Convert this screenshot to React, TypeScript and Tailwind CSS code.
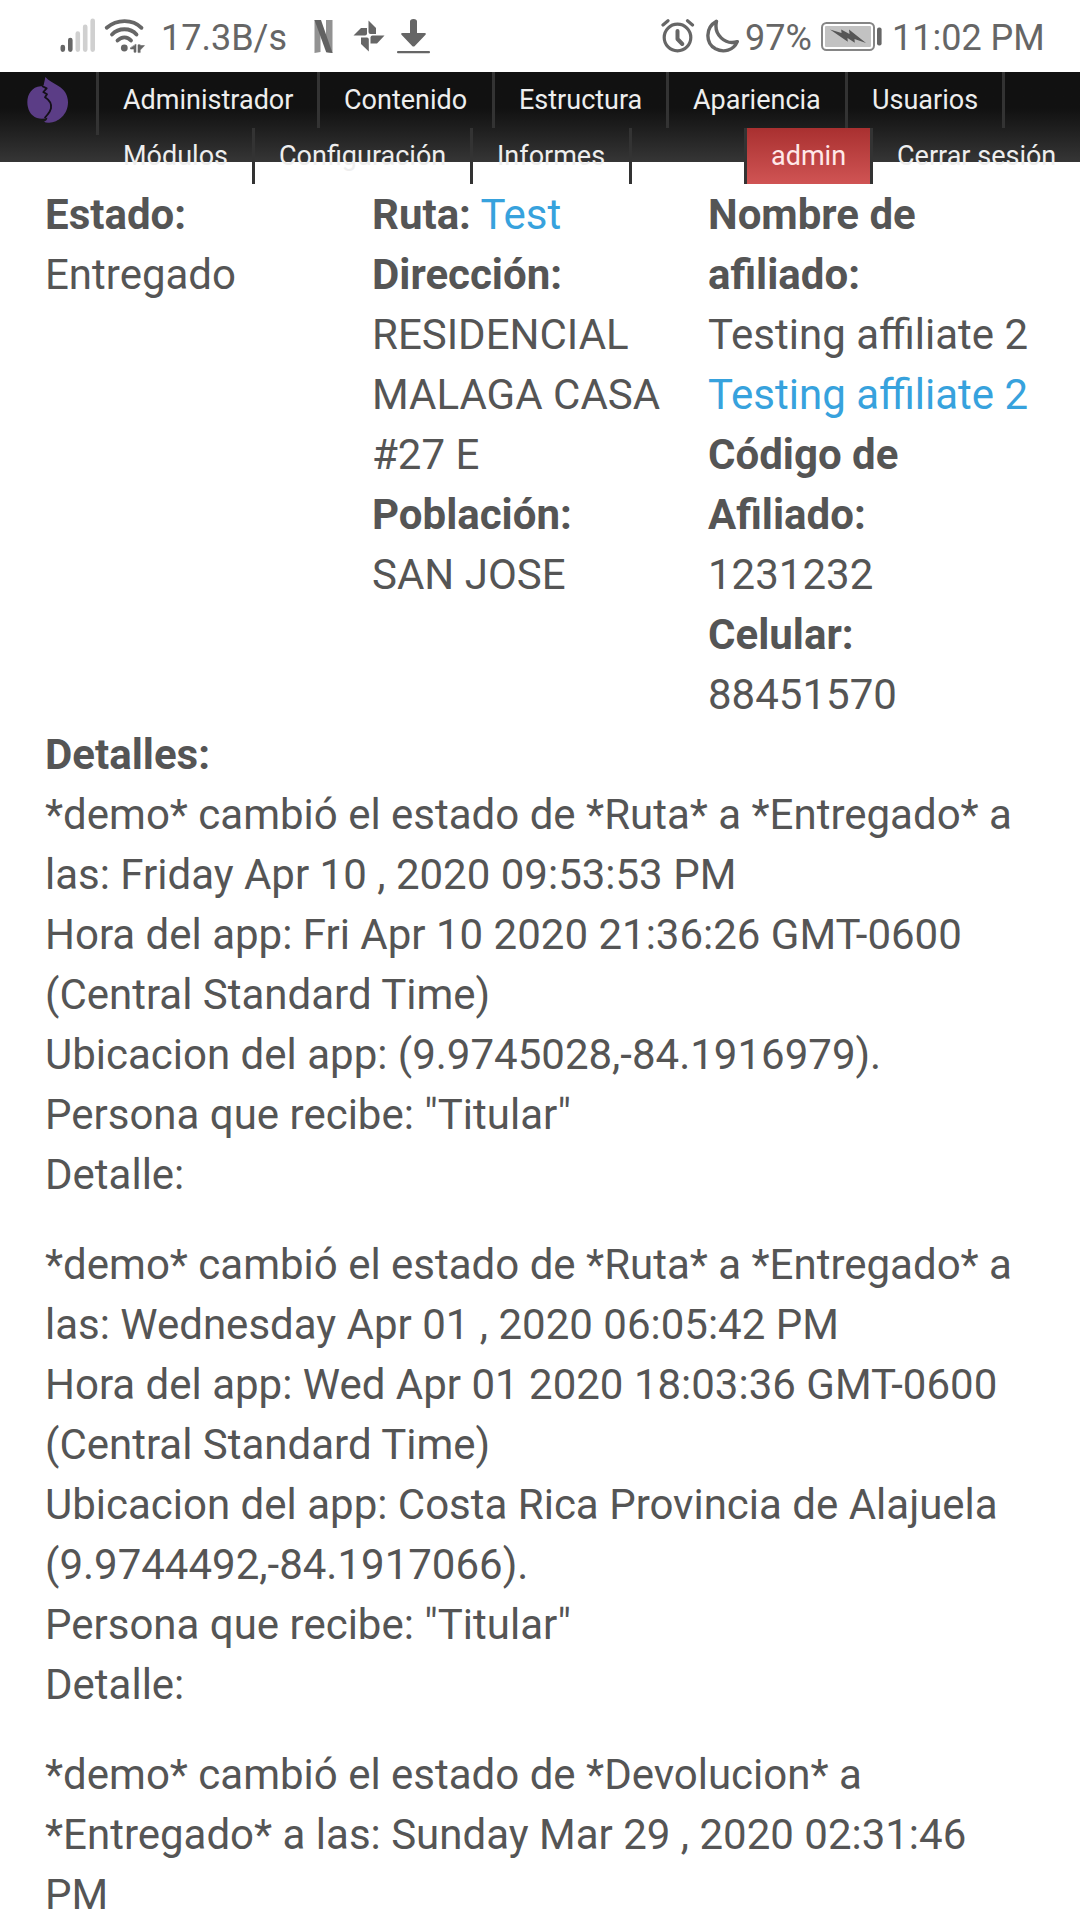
import React from "react";

const SignalIcon = () => (
  <svg className="h-[36px] w-[37px]" viewBox="0 0 37 36" strokeWidth="4.6" strokeLinecap="round">
    <path d="M2.8 29v2.6M10.3 22v9.6" stroke="#666" />
    <path d="M17.8 15.5v16.1M25.2 8.800v22.800M32.700 2.800v28.800" stroke="#d0d0d0" />
  </svg>
);

const WifiIcon = () => (
  <svg className="h-[36px] w-[42px]" viewBox="0 0 42 36" fill="none" stroke="#666" strokeWidth="3.800" strokeLinecap="round">
    <path d="M2.700 9.800C13 .9 28.500 .9 37.500 9.800M8 16.500C14.500 9.500 26.500 9.500 32.500 16.500M13.500 22.500C17.500 18.200 23.500 18.200 27 22.500" />
    <circle cx="20.300" cy="30" r="3.400" fill="#666" stroke="none" />
    <path d="M32 26.500v7.700h-2v-3.200h-3.500v-1zM34 34.200V26.800h2.200v.8h4.300l-4.300 4.500v2.100z" fill="#666" stroke="#666" strokeWidth=".6" />
  </svg>
);

const NIcon = () => (
  <svg className="h-[33px] w-[19px]" viewBox="0 0 19 33">
    <path d="M.5 0h6v32l-6 1zM12 0h6.500v33l-6.500-1z" fill="#929292" />
    <path d="M.5 0H7l11.500 33-6.300-.8z" fill="#626262" />
  </svg>
);

const PinwheelIcon = () => (
  <svg className="h-[32px] w-[32px]" viewBox="0 0 32 32" fill="#666">
    <path d="M15.500 .5L23 8v6h-5.500q-2 0-2-2z" />
    <path d="M31.500 15.500L24 23.500h-6.500v-6q0-2 2-2z" />
    <path d="M15.800 31.500L8 24v-6.500h6q1.800 0 1.800 2z" />
    <path d="M.5 15.500L8 8h6v5.500q0 2-2 2z" />
  </svg>
);

const DownloadIcon = () => (
  <svg className="h-[35px] w-[33px]" viewBox="0 0 33 35" fill="#666">
    <path d="M13 2.500Q13 0 16.500 0T20 2.500V14h7.500q2.200.2 1 1.800L17.800 27q-1.300 1.200-2.600 0L4.500 15.800Q3.300 14.200 5.500 14H13z" />
    <rect x="0" y="32" width="33" height="2.200" rx="1" />
  </svg>
);

const AlarmIcon = () => (
  <svg className="h-[34px] w-[34px]" viewBox="0 0 34 34" fill="none" stroke="#666" strokeLinecap="round">
    <circle cx="16.500" cy="18.500" r="13.300" strokeWidth="3.200" />
    <path d="M16.500 12v8l4.800 5" strokeWidth="4" strokeLinejoin="round" />
    <path d="M2 6l5-4.200M26.500 1.800L31.500 6" strokeWidth="3.200" />
  </svg>
);

const MoonIcon = () => (
  <svg className="h-[34px] w-[34px]" viewBox="0 0 34 34" fill="none" stroke="#666" strokeWidth="3.400" strokeLinejoin="round">
    <path d="M10.500 2.300C-.8 8.500-.8 24 9.500 29.800C17.500 34 27.500 31.500 31.300 22.600C19 26.500 7.500 15.500 10.500 2.300Z" />
  </svg>
);

const BatteryIcon = () => (
  <svg className="h-[30px] w-[62px]" viewBox="0 0 62 30">
    <rect x="1" y="1" width="52" height="27" rx="4.500" fill="#fff" stroke="#858585" strokeWidth="2" />
    <rect x="4" y="4" width="46" height="21" rx="1" fill="#c2c2c2" />
    <path d="M9 7.500L20.500 11l-.3-3.500L28.500 12l-.5-4.500L45 21l-11.500-4 .3 3.800L26.500 16l.3 3.800z" fill="#565656" />
    <rect x="56" y="5.500" width="4.600" height="18" rx="2" fill="#666" />
  </svg>
);

const LogoIcon = () => (
  <svg className="h-14 w-[52px]" viewBox="0 0 156 168">
    <path
      d="M70 15C80 26 92 32 108 41C128 52 138 70 138 91C138 128 108 152 82 152Q72 153 66 149C72 147 76 142 76 137C66 141 56 141 45 138C26 132 16 112 16 91C16 66 30 45 56 43Q62 43 65 40C66 32 68 28 70 15Z"
      fill="#5b3d86"
    />
    <path
      d="M60 42L74 49L64 60L75 67L69 76C82 84 89 96 87 109Q84 120 78 126L68 138"
      fill="none"
      stroke="#141018"
      strokeWidth="5.500"
      strokeLinejoin="round"
    />
  </svg>
);

const Tab = ({ label, size }: { label: string; size: string }) => (
  <div className={`h-14 shrink-0 border-r-[3px] border-[#333] pl-6 leading-14 ${size}`}>{label}</div>
);

const Entry = ({ lines }: { lines: string[] }) => (
  <div className="mb-[30px]">
    {lines.map((line, i) => (
      <p key={i}>{line}</p>
    ))}
  </div>
);

export default function App() {
  return (
    <div className="h-[1920px] w-[1080px] overflow-hidden bg-white font-[Roboto,sans-serif] whitespace-nowrap">
      <header className="flex h-[72px] items-start pl-[60px] text-4xl leading-[76px] text-[#666]">
        <div className="mt-[18px]"><SignalIcon /></div>
        <div className="mt-[18px] ml-[7px]"><WifiIcon /></div>
        <span className="ml-[15px] w-[127px] leading-[76px]">17.3B/s</span>
        <div className="mt-[20px] ml-[26px]"><NIcon /></div>
        <div className="mt-[20px] ml-[20px]"><PinwheelIcon /></div>
        <div className="mt-[19px] ml-[12px]"><DownloadIcon /></div>
        <div className="mt-[19px] ml-[231px]"><AlarmIcon /></div>
        <div className="mt-[19px] ml-[11px]"><MoonIcon /></div>
        <span className="ml-[5px] w-[76px] leading-[76px]">97%</span>
        <div className="mt-[22px]"><BatteryIcon /></div>
        <span className="ml-[9px] leading-[76px]">11:02 PM</span>
      </header>

      <nav className="flex h-[90px] items-start bg-linear-to-b from-[#111] from-40% to-[#363636] text-[27px] text-[#eee]">
        <div className="flex h-[63px] w-[99px] border-r-[3px] border-[#333] pl-[22px]">
          <LogoIcon />
        </div>
        <div className="w-[981px]">
          <div className="flex">
            <Tab label="Administrador" size="w-[221px]" />
            <Tab label="Contenido" size="w-[175px]" />
            <Tab label="Estructura" size="w-[174px]" />
            <Tab label="Apariencia" size="w-[179px]" />
            <Tab label="Usuarios" size="w-[157px]" />
          </div>
          <div className="flex">
            <Tab label="Módulos" size="w-[156px]" />
            <Tab label="Configuración" size="w-[218px]" />
            <Tab label="Informes" size="w-[159px]" />
            <div className="ml-auto h-14 w-[129px] border-x-[3px] border-[#333] bg-linear-to-b from-[#a93030] to-[#d05454] pl-6 leading-14 text-[#ffe8e8]">admin</div>
            <div className="w-[207px] pl-6 leading-14">Cerrar sesión</div>
          </div>
        </div>
      </nav>

      <main className="pt-[23px] pl-[45px] text-[42px] leading-[60px] text-[#555]">
        <section className="flex h-[540px]">
          <div className="w-[327px]">
            <p className="font-bold">Estado:</p>
            <p>Entregado</p>
          </div>
          <div className="w-[336px]">
            <p><b>Ruta:</b> <a className="text-[#37a2dd]">Test</a></p>
            <p className="font-bold">Dirección:</p>
            <p>RESIDENCIAL</p>
            <p>MALAGA CASA</p>
            <p>#27 E</p>
            <p className="font-bold">Población:</p>
            <p>SAN JOSE</p>
          </div>
          <div>
            <p className="font-bold">Nombre de</p>
            <p className="font-bold">afiliado:</p>
            <p>Testing affiliate 2</p>
            <p><a className="text-[#37a2dd]">Testing affiliate 2</a></p>
            <p className="font-bold">Código de</p>
            <p className="font-bold">Afiliado:</p>
            <p>1231232</p>
            <p className="font-bold">Celular:</p>
            <p>88451570</p>
          </div>
        </section>
        <p className="font-bold">Detalles:</p>
        <Entry
          lines={[
            "*demo* cambió el estado de *Ruta* a *Entregado* a",
            "las: Friday Apr 10 , 2020 09:53:53 PM",
            "Hora del app: Fri Apr 10 2020 21:36:26 GMT-0600",
            "(Central Standard Time)",
            "Ubicacion del app: (9.9745028,-84.1916979).",
            'Persona que recibe: "Titular"',
            "Detalle:",
          ]}
        />
        <Entry
          lines={[
            "*demo* cambió el estado de *Ruta* a *Entregado* a",
            "las: Wednesday Apr 01 , 2020 06:05:42 PM",
            "Hora del app: Wed Apr 01 2020 18:03:36 GMT-0600",
            "(Central Standard Time)",
            "Ubicacion del app: Costa Rica Provincia de Alajuela",
            "(9.9744492,-84.1917066).",
            'Persona que recibe: "Titular"',
            "Detalle:",
          ]}
        />
        <Entry
          lines={[
            "*demo* cambió el estado de *Devolucion* a",
            "*Entregado* a las: Sunday Mar 29 , 2020 02:31:46",
            "PM",
          ]}
        />
      </main>
    </div>
  );
}
